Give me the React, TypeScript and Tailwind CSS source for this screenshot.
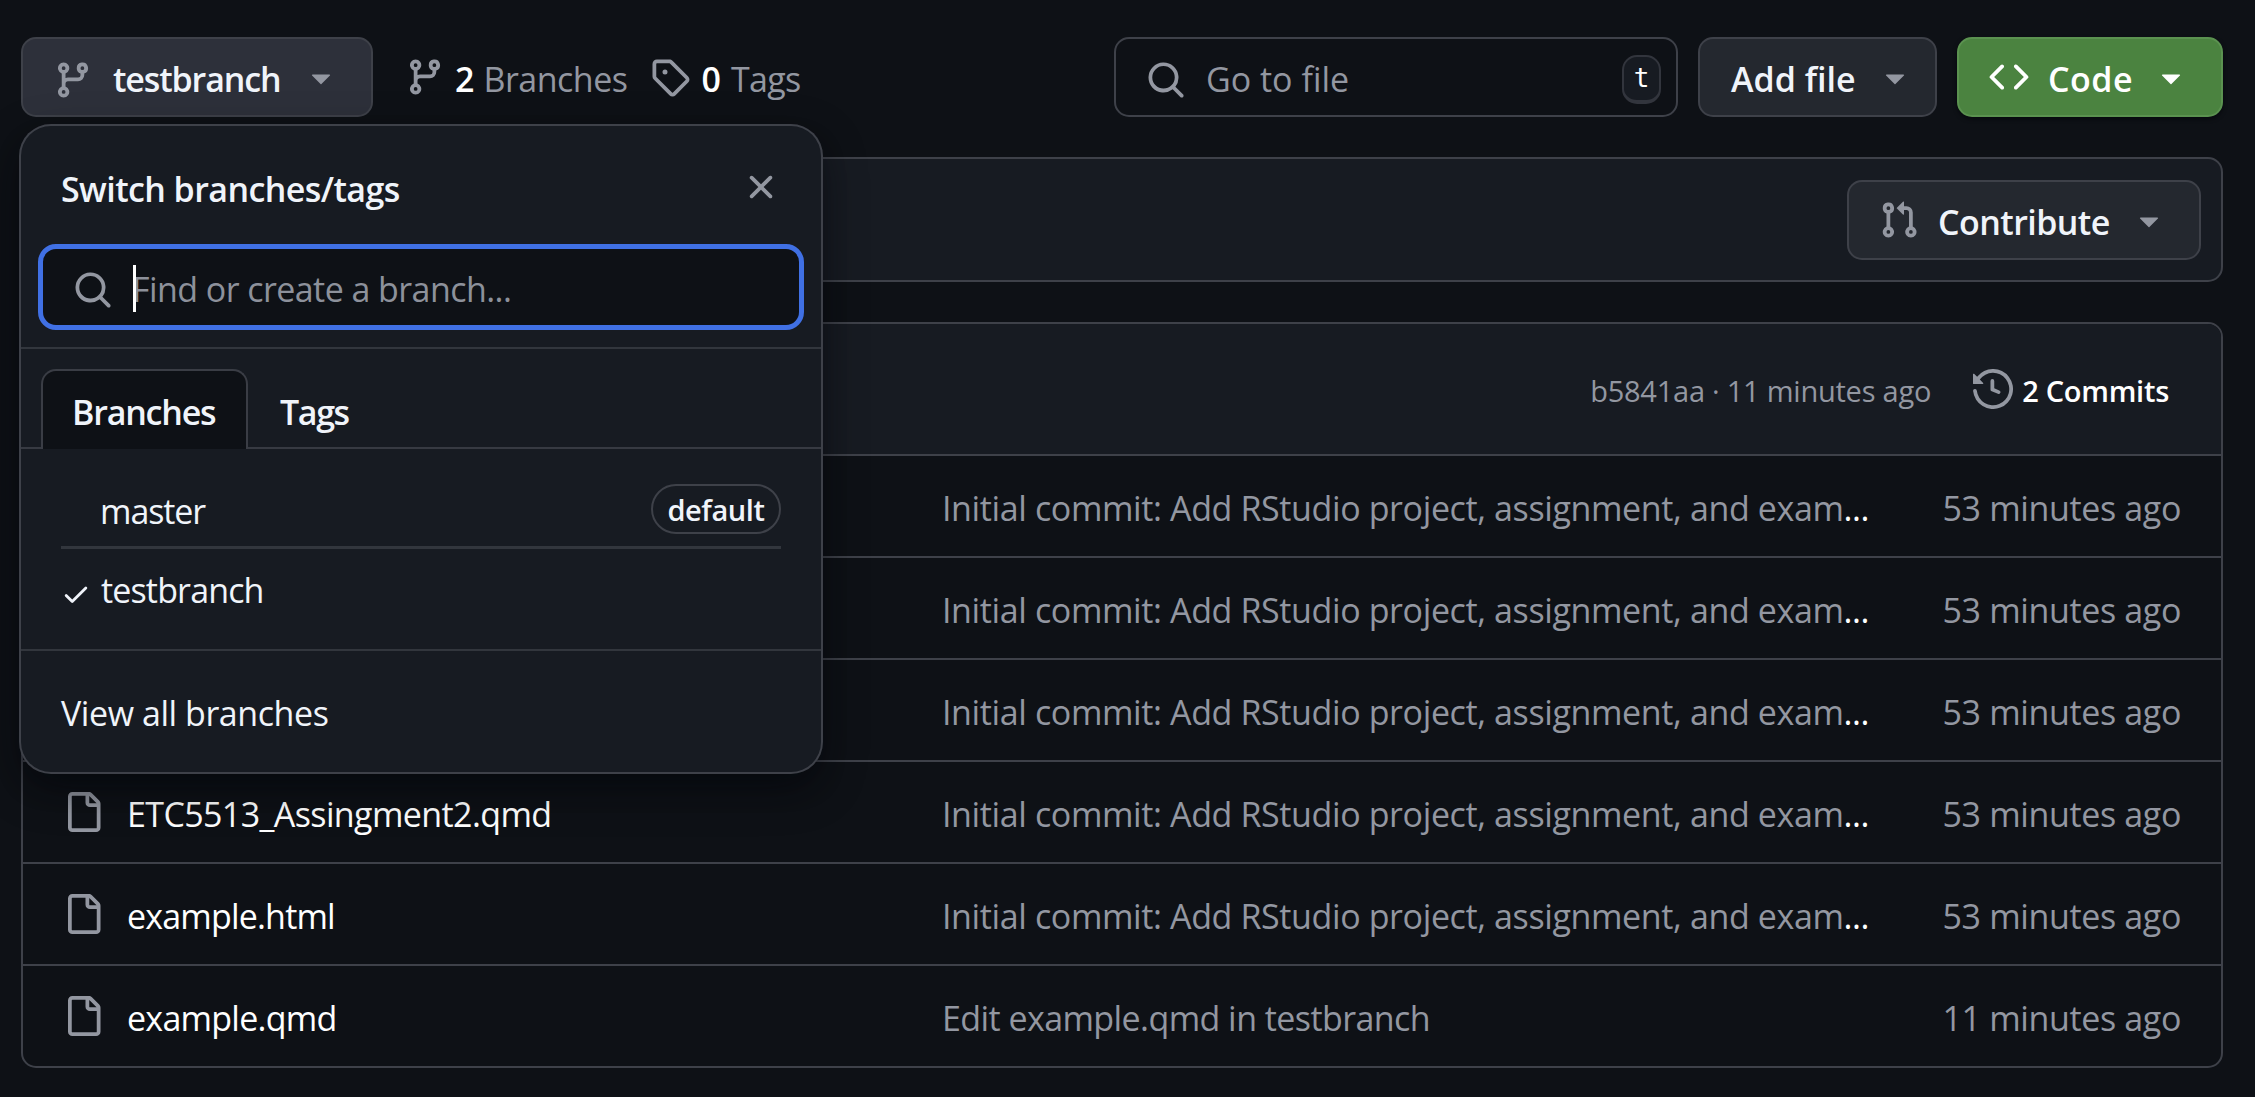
import type { ReactNode } from "react";

const icons = {
  branch:
    "M9.5 3.25a2.25 2.25 0 1 1 3 2.122V6A2.5 2.5 0 0 1 10 8.5H6a1 1 0 0 0-1 1v1.128a2.251 2.251 0 1 1-1.5 0V5.372a2.25 2.25 0 1 1 1.5 0v1.836A2.493 2.493 0 0 1 6 7h4a1 1 0 0 0 1-1v-.628A2.25 2.25 0 0 1 9.5 3.25Zm-6 0a.75.75 0 1 0 1.5 0 .75.75 0 0 0-1.5 0Zm8.25-.75a.75.75 0 1 0 0 1.5.75.75 0 0 0 0-1.5ZM4.25 12a.75.75 0 1 0 0 1.5.75.75 0 0 0 0-1.5Z",
  tag: "M1 7.775V2.75C1 1.784 1.784 1 2.75 1h5.025c.464 0 .91.184 1.238.513l6.25 6.25a1.75 1.75 0 0 1 0 2.474l-5.026 5.026a1.75 1.75 0 0 1-2.474 0l-6.25-6.25A1.752 1.752 0 0 1 1 7.775Zm1.5 0c0 .066.026.13.073.177l6.25 6.25a.25.25 0 0 0 .354 0l5.025-5.025a.25.25 0 0 0 0-.354l-6.25-6.25a.25.25 0 0 0-.177-.073H2.75a.25.25 0 0 0-.25.25ZM6 5a1 1 0 1 1 0 2 1 1 0 0 1 0-2Z",
  search:
    "M10.68 11.74a6 6 0 0 1-7.922-8.982 6 6 0 0 1 8.982 7.922l3.04 3.04a.749.749 0 0 1-.326 1.275.749.749 0 0 1-.734-.215ZM11.5 7a4.499 4.499 0 1 0-8.997 0A4.499 4.499 0 0 0 11.5 7Z",
  code: "m11.28 3.22 4.25 4.25a.75.75 0 0 1 0 1.06l-4.25 4.25a.749.749 0 0 1-1.275-.326.749.749 0 0 1 .215-.734L13.94 8l-3.72-3.72a.749.749 0 0 1 .326-1.275.749.749 0 0 1 .734.215Zm-6.56 0a.751.751 0 0 1 1.042.018.751.751 0 0 1 .018 1.042L2.06 8l3.72 3.72a.749.749 0 0 1-.326 1.275.749.749 0 0 1-.734-.215L.47 8.53a.75.75 0 0 1 0-1.06Z",
  pull: "M1.5 3.25a2.25 2.25 0 1 1 3 2.122v5.256a2.251 2.251 0 1 1-1.5 0V5.372A2.25 2.25 0 0 1 1.5 3.25Zm5.677-.177L9.573.677A.25.25 0 0 1 10 .854V2.5h1A2.5 2.5 0 0 1 13.5 5v5.628a2.251 2.251 0 1 1-1.5 0V5a1 1 0 0 0-1-1h-1v1.646a.25.25 0 0 1-.427.177L7.177 3.427a.25.25 0 0 1 0-.354ZM3.75 2.5a.75.75 0 1 0 0 1.5.75.75 0 0 0 0-1.5Zm0 9.5a.75.75 0 1 0 0 1.5.75.75 0 0 0 0-1.5Zm8.25.75a.75.75 0 1 0 1.5 0 .75.75 0 0 0-1.5 0Z",
  history:
    "m.427 1.927 1.215 1.215a8.002 8.002 0 1 1-1.6 5.685.75.75 0 1 1 1.493-.154 6.5 6.5 0 1 0 1.18-4.458l1.358 1.358A.25.25 0 0 1 3.896 6H.25A.25.25 0 0 1 0 5.75V2.104a.25.25 0 0 1 .427-.177ZM7.75 4a.75.75 0 0 1 .75.75v2.992l2.028.812a.75.75 0 0 1-.557 1.392l-2.5-1A.751.751 0 0 1 7 8.25v-3.5A.75.75 0 0 1 7.75 4Z",
  file: "M2 1.75C2 .784 2.784 0 3.75 0h6.586c.464 0 .909.184 1.237.513l2.914 2.914c.329.328.513.773.513 1.237v9.586A1.75 1.75 0 0 1 13.25 16h-9.5A1.75 1.75 0 0 1 2 14.25Zm1.75-.25a.25.25 0 0 0-.25.25v12.5c0 .138.112.25.25.25h9.5a.25.25 0 0 0 .25-.25V6h-2.75A1.75 1.75 0 0 1 9 4.25V1.5Zm6.75.062V4.25c0 .138.112.25.25.25h2.688l-.011-.013-2.914-2.914-.013-.011Z",
  close:
    "M3.72 3.72a.75.75 0 0 1 1.06 0L8 6.94l3.22-3.22a.749.749 0 0 1 1.275.326.749.749 0 0 1-.215.734L9.06 8l3.22 3.22a.749.749 0 0 1-.326 1.275.749.749 0 0 1-.734-.215L8 9.06l-3.22 3.22a.751.751 0 0 1-1.042-.018.751.751 0 0 1-.018-1.042L6.94 8 3.72 4.78a.75.75 0 0 1 0-1.06Z",
  check:
    "M13.78 4.22a.75.75 0 0 1 0 1.06l-7.25 7.25a.75.75 0 0 1-1.06 0L2.22 9.28a.751.751 0 0 1 .018-1.042.751.751 0 0 1 1.042-.018L6 10.94l6.72-6.72a.75.75 0 0 1 1.06 0Z",
  caret:
    "m4.427 7.427 3.396 3.396a.25.25 0 0 0 .354 0l3.396-3.396A.25.25 0 0 0 11.396 7H4.604a.25.25 0 0 0-.177.427Z",
};

function Icon({ name, className = "size-10" }: { name: keyof typeof icons; className?: string }) {
  return (
    <svg viewBox="0 0 16 16" fill="currentColor" className={`shrink-0 ${className}`} aria-hidden="true">
      <path d={icons[name]} />
    </svg>
  );
}

/** Single-line label; the top margin seats its baseline within a bar. */
function Label({ className = "mt-[3px]", children }: { className?: string; children: ReactNode }) {
  return <span className={`block whitespace-pre ${className}`}>{children}</span>;
}

const LONG = "Initial commit: Add RStudio project, assignment, and exam";

const files = [
  { name: "", tracking: "", message: LONG, cut: true, age: "53 minutes ago" },
  { name: "", tracking: "", message: LONG, cut: true, age: "53 minutes ago" },
  { name: "", tracking: "", message: LONG, cut: true, age: "53 minutes ago" },
  { name: "ETC5513_Assingment2.qmd", tracking: "tracking-[-0.61px]", message: LONG, cut: true, age: "53 minutes ago" },
  { name: "example.html", tracking: "tracking-[-0.82px]", message: LONG, cut: true, age: "53 minutes ago" },
  {
    name: "example.qmd",
    tracking: "tracking-[-0.75px]",
    message: "Edit example.qmd in testbranch",
    cut: false,
    age: "11 minutes ago",
  },
];

function BranchMenu() {
  return (
    <div className="absolute top-[89px] left-0 z-10 flex h-[646px] w-[800px] flex-col rounded-[30px] bg-[#171b22] text-[#f0f4fa] shadow-[0_0_0_2px_#3e4149,0_15px_30px_-7px_rgba(1,4,9,0.4),0_15px_45px_0_rgba(1,4,9,0.4)]">
      <div className="flex h-[118px] shrink-0 items-center justify-between pt-[4px] pr-10 pl-10">
        <Label className="mt-[3px] font-semibold tracking-[-0.58px]">Switch branches/tags</Label>
        <Icon name="close" className="size-10 text-[#9397a1]" />
      </div>
      <div className="h-[105px] shrink-0 border-b-2 border-[#32363d] px-[17px]">
        <div className="flex h-[86px] items-center rounded-[18px] border-[5px] border-[#4070e4] bg-[#0e1116] pl-[30px]">
          <Icon name="search" className="size-10 translate-y-[3px] text-[#9397a1]" />
          <div className="ml-[20px] h-[47px] w-[3px] translate-y-px bg-white" />
          <Label className="mt-[3px] -ml-[4px] tracking-[-0.57px] text-[#8d919b]">Find or create a branch...</Label>
        </div>
      </div>
      <div className="flex h-[100px] shrink-0 items-end border-b-2 border-[#373a42] pl-5">
        <div className="-mb-[2px] flex h-20 w-[207px] items-center rounded-t-[15px] border-2 border-b-0 border-[#3a3d45] bg-[#0e1116] pl-[29px]">
          <Label className="mt-[4px] font-semibold tracking-[-1.21px]">Branches</Label>
        </div>
        <div className="-mb-[2px] flex h-20 items-center pl-[32px]">
          <Label className="mt-[6px] font-semibold tracking-[-1.4px]">Tags</Label>
        </div>
      </div>
      <div className="h-[202px] shrink-0 border-b-2 border-[#32363d] px-10 pt-[20px]">
        <div className="flex h-[80px] items-center border-b-[3px] border-[#32363d] pl-[39px]">
          <Label className="mt-[6px] flex-1 tracking-[-1.1px]">master</Label>
          <span className="mt-[2px] flex h-[50px] w-[130px] items-center justify-center rounded-full border-2 border-[#3e4149] text-[29px] font-semibold tracking-[-0.43px]">
            <Label className="mt-[3px]">default</Label>
          </span>
        </div>
        <div className="flex h-20 items-center">
          <Icon name="check" className="size-[30px] translate-y-[5px]" />
          <Label className="mt-[1px] ml-[10px] tracking-[-0.85px]">testbranch</Label>
        </div>
      </div>
      <div className="flex flex-1 items-center pl-10">
        <Label className="mt-[2px] tracking-[-0.44px]">View all branches</Label>
      </div>
    </div>
  );
}

export default function App() {
  return (
    <div className="flex h-[1097px] w-[2255px] flex-col overflow-hidden bg-[#0e1116] pt-[37px] pr-8 pl-[21px] font-['Open_Sans',sans-serif] text-[34px] leading-[50px] text-[#f0f4fa]">
      <header className="flex h-20 shrink-0 items-center">
        <div className="relative">
          <button className="flex h-20 w-[352px] items-center rounded-[15px] border-2 border-[#3e4149] bg-[#2d303a] pl-[30px]">
            <Icon name="branch" className="size-10 translate-y-[3px] text-[#9397a1]" />
            <Label className="mt-[3px] ml-[20px] w-[167px] text-left font-semibold tracking-[-1.12px]">testbranch</Label>
            <Icon name="caret" className="ml-[21px] size-10 text-[#9397a1]" />
          </button>
          <BranchMenu />
        </div>
        <div className="ml-8 flex items-center text-[#9397a1]">
          <Icon name="branch" />
          <Label className="mt-[3px] ml-[10px] font-semibold text-white">2</Label>
          <Label className="mt-[3px] ml-[9px] w-[145px] tracking-[-0.5px]">Branches</Label>
          <Icon name="tag" className="ml-[22px] size-10" />
          <Label className="mt-[3px] ml-[11px] font-semibold text-white">0</Label>
          <Label className="mt-[3px] ml-[10px] tracking-[-0.69px]">Tags</Label>
        </div>
        <div className="ml-auto flex h-20 w-[564px] items-center rounded-[15px] border-2 border-[#3e4149] pr-[15px] pl-[30px]">
          <Icon name="search" className="size-10 translate-y-[3px] text-[#9397a1]" />
          <Label className="mt-[3px] ml-[20px] flex-1 text-[#9397a1]">Go to file</Label>
          <kbd className="flex h-[49px] w-[39px] translate-y-[2px] items-center justify-center rounded-[15px] border-2 border-b-[4px] border-[#32353d] bg-[#171b22] font-['DejaVu_Sans_Mono',monospace] text-[26px] leading-none text-white">
            t
          </kbd>
        </div>
        <button className="ml-5 flex h-20 w-[239px] items-center rounded-[15px] border-2 border-[#3e4149] bg-[#24282f] pl-[31px]">
          <Label className="mt-[3px] w-[125px] text-left font-semibold">Add file</Label>
          <Icon name="caret" className="ml-[19px] size-10 text-[#9397a1]" />
        </button>
        <button className="ml-5 flex h-20 w-[266px] items-center rounded-[15px] border-2 border-[#5b9250] bg-[#4b8340] pl-[30px] text-white shadow-[0_2px_4px_rgba(1,4,9,0.6)]">
          <Icon name="code" />
          <Label className="mt-[3px] ml-[19px] w-[83px] text-left font-semibold tracking-[0.5px]">Code</Label>
          <Icon name="caret" className="ml-[20px] size-10" />
        </button>
      </header>

      <section className="mt-10 flex h-[125px] shrink-0 items-center justify-end rounded-[15px] border-2 border-[#3e4149] bg-[#171b22] pr-5">
        <button className="flex h-20 w-[354px] items-center rounded-[15px] border-2 border-[#3e4149] bg-[#24282f] pl-[30px]">
          <Icon name="pull" className="size-10 text-[#9397a1]" />
          <Label className="mt-[4px] ml-[19px] w-[171px] text-left font-semibold tracking-[-0.55px]">Contribute</Label>
          <Icon name="caret" className="ml-[20px] size-10 text-[#9397a1]" />
        </button>
      </section>

      <section className="mt-10 flex h-[746px] shrink-0 flex-col overflow-hidden rounded-[15px] border-2 border-[#3e4149]">
        <div className="flex h-[132px] shrink-0 items-center justify-end border-b-2 border-[#3e4149] bg-[#171b22] pr-[52px] text-[29px] text-[#9397a1]">
          <Label className="mt-[3px] tracking-[-0.24px]">b5841aa · 11 minutes ago</Label>
          <Icon name="history" className="ml-[42px] size-10" />
          <Label className="mt-[3px] ml-[9px] font-semibold tracking-[-0.26px] text-white">2 Commits</Label>
        </div>
        {files.map((file, index) => (
          <div
            key={index}
            className="flex h-[102px] shrink-0 items-center border-b-2 border-[#3e4149] pr-[40px] pl-10 text-[#9397a1] last:h-[100px] last:border-b-0"
          >
            <Icon name="file" />
            <Label className="mt-[3px] ml-[24px] w-[815px]">
              <span className={`text-white ${file.tracking}`}>{file.name}</span>
            </Label>
            <Label className="mt-[3px] flex-1 tracking-[-0.38px]">
              {file.cut ? (
                <>
                  {file.message}
                  <span className="text-white">...</span>
                </>
              ) : (
                <span className="tracking-[-0.57px]">{file.message}</span>
              )}
            </Label>
            <Label className="mt-[3px] tracking-[-0.36px]">{file.age}</Label>
          </div>
        ))}
      </section>
    </div>
  );
}
